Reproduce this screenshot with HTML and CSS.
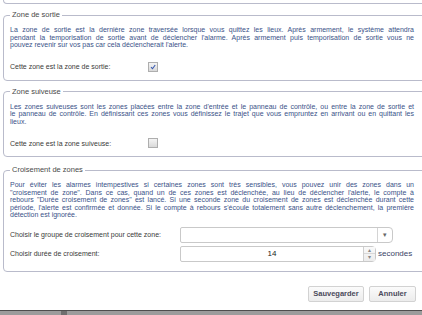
FILE: index.html
```html
<!DOCTYPE html>
<html lang="fr">
<head>
    <meta charset="UTF-8">
    <meta name="viewport" content="width=device-width, initial-scale=1.0">
    <title>Zones</title>
    <link rel="stylesheet" href="styles.css">
</head>
<body>
<div class="page">
    <div class="prev-box"></div>

    <fieldset class="zone first">
        <legend>Zone de sortie</legend>
        <p class="info">
            <span class="ln">La zone de sortie est la dernière zone traversée lorsque vous quittez les lieux. Après armement, le système attendra</span>
            <span class="ln">pendant la temporisation de sortie avant de déclencher l'alarme. Après armement puis temporisation de sortie vous ne</span>
            <span class="last">pouvez revenir sur vos pas car cela déclencherait l'alerte.</span>
        </p>
        <div class="row">
            <span class="lbl short">Cette zone est la zone de sortie:</span>
            <span class="check on">
                <svg width="6" height="6" viewBox="0 0 6 6"><path d="M1 3.2 L2.5 4.7 L5.2 1" fill="none" stroke="#3a5bb0" stroke-width="1.1"/></svg>
            </span>
        </div>
    </fieldset>

    <fieldset class="zone">
        <legend>Zone suiveuse</legend>
        <p class="info">
            <span class="ln">Les zones suiveuses sont les zones placées entre la zone d'entrée et le panneau de contrôle, ou entre la zone de sortie et</span>
            <span class="ln">le panneau de contrôle. En définissant ces zones vous définissez le trajet que vous empruntez en arrivant ou en quittant les</span>
            <span class="last">lieux.</span>
        </p>
        <div class="row">
            <span class="lbl short">Cette zone est la zone suiveuse:</span>
            <span class="check"></span>
        </div>
    </fieldset>

    <fieldset class="zone cross">
        <legend>Croisement de zones</legend>
        <p class="info">
            <span class="ln">Pour éviter les alarmes intempestives si certaines zones sont très sensibles, vous pouvez unir des zones dans un</span>
            <span class="ln">"croisement de zone". Dans ce cas, quand un de ces zones est déclenchée, au lieu de déclencher l'alerte, le compte à</span>
            <span class="ln">rebours "Durée croisement de zones" est lancé. Si une seconde zone du croisement de zones est déclenchée durant cette</span>
            <span class="ln">période, l'alerte est confirmée et donnée. Si le compte à rebours s'écoule totalement sans autre déclenchement, la première</span>
            <span class="last">détection est ignorée.</span>
        </p>
        <div class="row field">
            <span class="lbl">Choisir le groupe de croisement pour cette zone:</span>
            <div class="select">
                <span class="select-val"></span>
                <span class="select-arrow">&#9662;</span>
            </div>
        </div>
        <div class="row field">
            <span class="lbl">Choisir durée de croisement:</span>
            <div class="number">
                <span class="number-val">14</span>
                <span class="spin">
                    <span class="spin-up">&#9652;</span>
                    <span class="spin-down">&#9662;</span>
                </span>
            </div>
            <span class="unit">secondes</span>
        </div>
    </fieldset>

    <div class="actions">
        <button class="btn">Sauvegarder</button>
        <button class="btn">Annuler</button>
    </div>

    <div class="hbar"><span class="hbar-grip"></span></div>
</div>
</body>
</html>
```

FILE: styles.css
```css
html, body { margin: 0; padding: 0; background: #fff; overflow: hidden; }
body { font-family: "Liberation Sans", Arial, sans-serif; color: #333; }

.page { width: 422px; height: 315px; display: flex; flex-direction: column; padding-left: 3px; box-sizing: border-box; }

.prev-box {
    width: 430px; height: 3px; border: 1px solid #b9bbcb; border-top: none;
    border-radius: 0 0 4px 4px; flex: none;
}

.zone {
    width: 430px; margin: 6px 0 0; padding: 0 14px 8px 6px; box-sizing: border-box;
    border: 1px solid #b9bbcb; border-radius: 4px; flex: none; min-width: 0;
}
.zone.cross { margin-top: 8px; padding-bottom: 9px; }
.zone legend { font-size: 7.5px; line-height: 10px; padding: 0 2px; color: #4a4a4a; }

.info {
    margin: 6px 0 0; font-size: 7px; line-height: 7.5px; color: #3a5288;
    width: 404px;
}
.info .ln { display: block; text-align: justify; text-align-last: justify; }
.info .last { display: block; }

.row { display: flex; align-items: center; margin-top: 13px; height: 10px; font-size: 7px; }
.lbl { width: 170px; flex: none; color: #3a3a3a; }
.lbl.short { width: 138px; }

.check {
    width: 8px; height: 8px; border: 1px solid #aeaeae; background: linear-gradient(#f4f4f4, #d9d9d9);
    display: flex; align-items: center; justify-content: center;
}

.row.field { height: 16px; margin-top: 3px; }
.cross .info + .row.field { margin-top: 8px; }

.select {
    width: 213px; height: 16px; box-sizing: border-box; border: 1px solid #c9c9c9; border-radius: 2px 4px 4px 2px;
    display: flex; background: #fff;
}
.select-val { flex: 1; }
.select-arrow {
    width: 14px; border-left: 1px solid #d4d4d4; font-size: 7px; color: #666;
    display: flex; align-items: center; justify-content: center;
}

.number {
    width: 196px; height: 16px; box-sizing: border-box; border: 1px solid #c9c9c9; border-radius: 2px 4px 4px 2px;
    display: flex; background: #fff;
}
.number-val { flex: 1; text-align: center; font-size: 8px; line-height: 14px; color: #222; }
.spin {
    width: 11px; border-left: 1px solid #cfcfcf; display: flex; flex-direction: column;
    background: linear-gradient(#fafafa, #ececec); font-size: 6px; color: #888;
}
.spin-up, .spin-down { flex: 1; display: flex; align-items: center; justify-content: center; line-height: 6px; }
.spin-up { border-bottom: 1px solid #d8d8d8; }
.unit { margin-left: 2px; font-size: 8px; color: #3a4466; }

.actions { display: flex; justify-content: flex-end; gap: 5px; margin-top: 14px; padding-right: 6px; }
.btn {
    height: 16px; padding: 0 4px; font-family: "Liberation Sans", Arial, sans-serif; font-size: 7.5px; font-weight: bold;
    color: #4a4a5a; background: linear-gradient(#fbfbfb, #ececec); border: 1px solid #d2d2d2; border-radius: 2px;
}
.btn:first-child { width: 56px; }
.btn:last-child { width: 47px; }

.hbar {
    margin-top: auto; margin-left: -3px; height: 4px; border-top: 1px solid #4e4e4e; background: #9c9c9c;
    position: relative; flex: none;
}
.hbar-grip { position: absolute; left: 61px; top: 0; width: 6px; height: 4px; background: #6e6e6e; }
```
